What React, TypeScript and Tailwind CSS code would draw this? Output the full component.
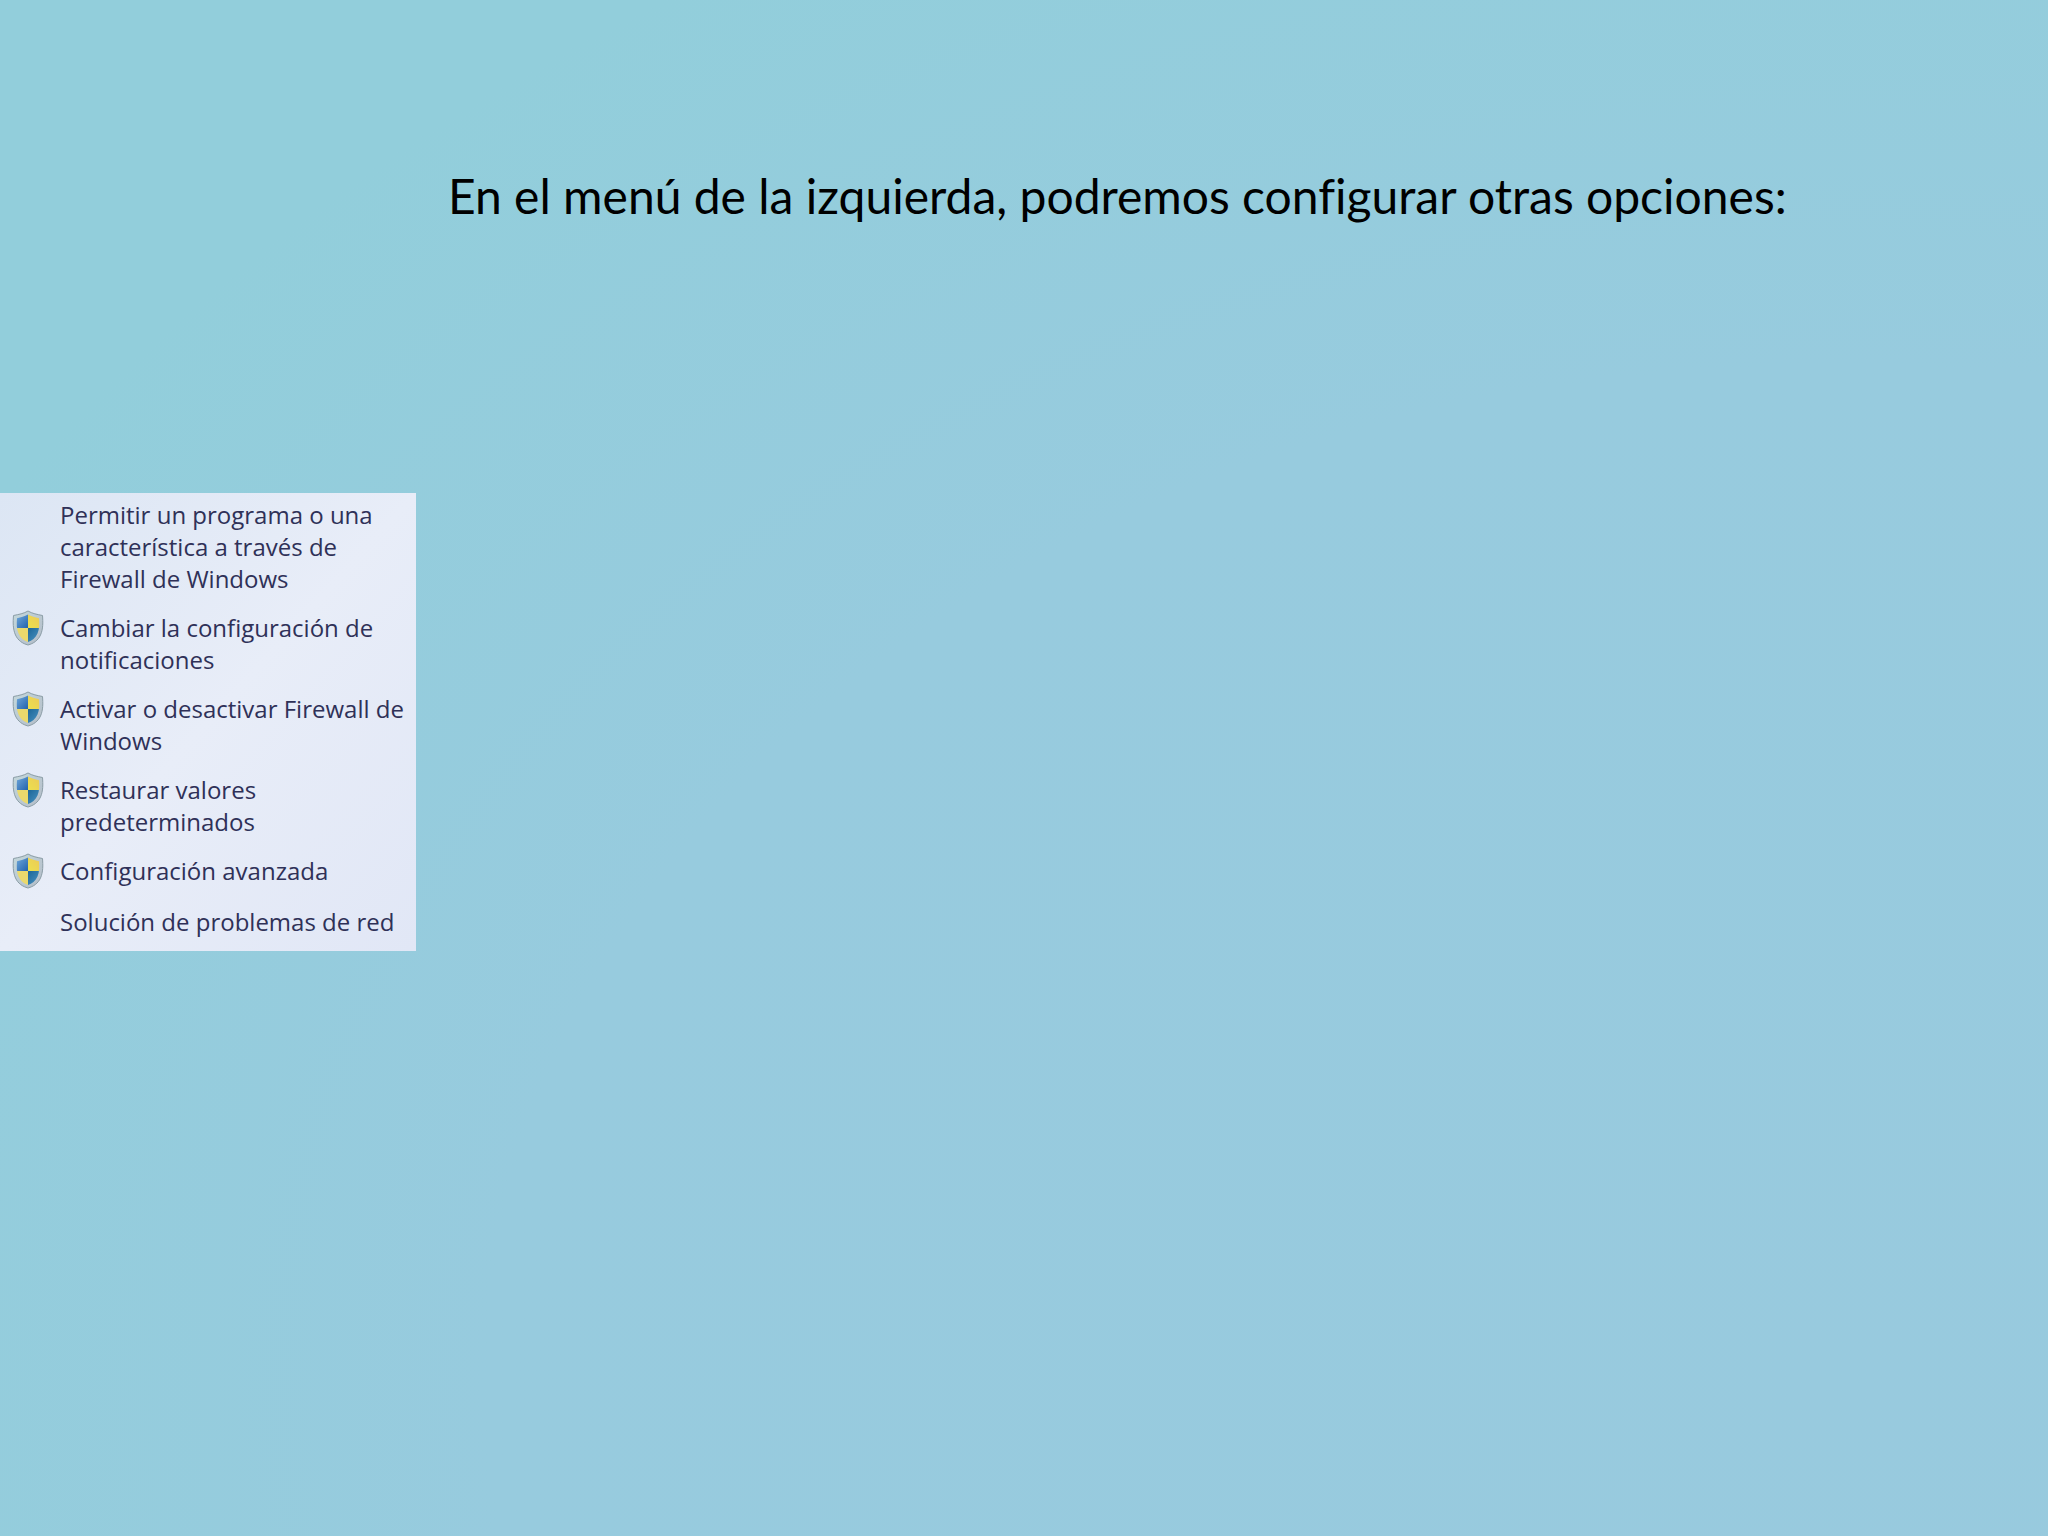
type Option = { lines: string[]; shield: boolean };

const options: Option[] = [
  { lines: ["Permitir un programa o una", "característica a través de", "Firewall de Windows"], shield: false },
  { lines: ["Cambiar la configuración de", "notificaciones"], shield: true },
  { lines: ["Activar o desactivar Firewall de", "Windows"], shield: true },
  { lines: ["Restaurar valores", "predeterminados"], shield: true },
  { lines: ["Configuración avanzada"], shield: true },
  { lines: ["Solución de problemas de red"], shield: false },
];

const OUTLINE = "M16 1C12 3.500 6.500 4.500 1.500 5.500C1 12 0.800 19 3.500 25C6 30.500 10.500 33.500 16 35C21.500 33.500 26 30.500 28.500 25C31.200 19 31 12 30.500 5.500C25.500 4.500 20 3.500 16 1Z";
const FACE = "M16 4.500C12.500 6.500 9 7.500 5 8.200C4.600 14 4.500 19 6.500 23.500C8.500 28 12 30.500 16 32C20 30.500 23.500 28 25.500 23.500C27.500 19 27.400 14 27 8.200C23 7.500 19.500 6.500 16 4.500Z";

function Shield() {
  return (
    <svg viewBox="0 0 32 36" className="h-9 w-8" aria-hidden="true">
      <defs>
        <clipPath id="shield-face">
          <path d={FACE} />
        </clipPath>
        <linearGradient id="shield-rim" x1="0" y1="0" x2="1" y2="1">
          <stop offset="0" stopColor="#c4d8dc" />
          <stop offset="1" stopColor="#b3bcc8" />
        </linearGradient>
        <linearGradient id="shield-blue" x1="0" y1="0" x2="1" y2="1">
          <stop offset="0" stopColor="#8cc0ea" />
          <stop offset="1" stopColor="#2263ae" />
        </linearGradient>
        <linearGradient id="shield-teal" x1="0" y1="0" x2="1" y2="1">
          <stop offset="0" stopColor="#1c6698" />
          <stop offset="1" stopColor="#5aa3d2" />
        </linearGradient>
        <linearGradient id="shield-gold" x1="1" y1="0" x2="0" y2="1">
          <stop offset="0" stopColor="#ecc25a" />
          <stop offset="1" stopColor="#ece04e" />
        </linearGradient>
      </defs>
      <path d={OUTLINE} fill="url(#shield-rim)" stroke="#8b9da6" strokeWidth="1" />
      <g clipPath="url(#shield-face)">
        <path d="M0 0H16V18H0Z" fill="url(#shield-blue)" />
        <path d="M16 0H32V18H16Z" fill="url(#shield-gold)" />
        <path d="M0 18H16V36H0Z" fill="#ead96c" />
        <path d="M16 18H32V36H16Z" fill="url(#shield-teal)" />
      </g>
    </svg>
  );
}

export default function App() {
  return (
    <main className="flex min-h-screen flex-col items-start bg-[radial-gradient(ellipse_at_90%_90%,#98cade_0%,#97cbde_52%,#92cedb_84%,#92cedb_100%)]">
      <h1 className="w-full pt-[164px] pl-[448px] font-[Lato,sans-serif] text-[48px] leading-[64px] text-black [font-variant-ligatures:none]">
        En el menú de la izquierda, podremos configurar otras opciones:
      </h1>
      <nav
        aria-label="Opciones de Firewall"
        className="mt-[265px] w-[416px] bg-linear-to-br from-[#dce6f4] via-[#e8edf8] to-[#e1e7f6] pt-[6px] pb-[13px] font-['Open_Sans',sans-serif] text-2xl leading-8 text-[#2f3158] [font-variant-ligatures:none]"
      >
        <ul className="flex flex-col gap-[17px]">
          {options.map((option) => (
            <li key={option.lines[0]} className="flex items-start last:mt-0.5">
              <span className="flex h-8 w-[60px] shrink-0 items-center pl-3">{option.shield && <Shield />}</span>
              <a href="#" className="whitespace-nowrap">
                {option.lines.map((line) => (
                  <span key={line} className="block">
                    {line}
                  </span>
                ))}
              </a>
            </li>
          ))}
        </ul>
      </nav>
    </main>
  );
}
